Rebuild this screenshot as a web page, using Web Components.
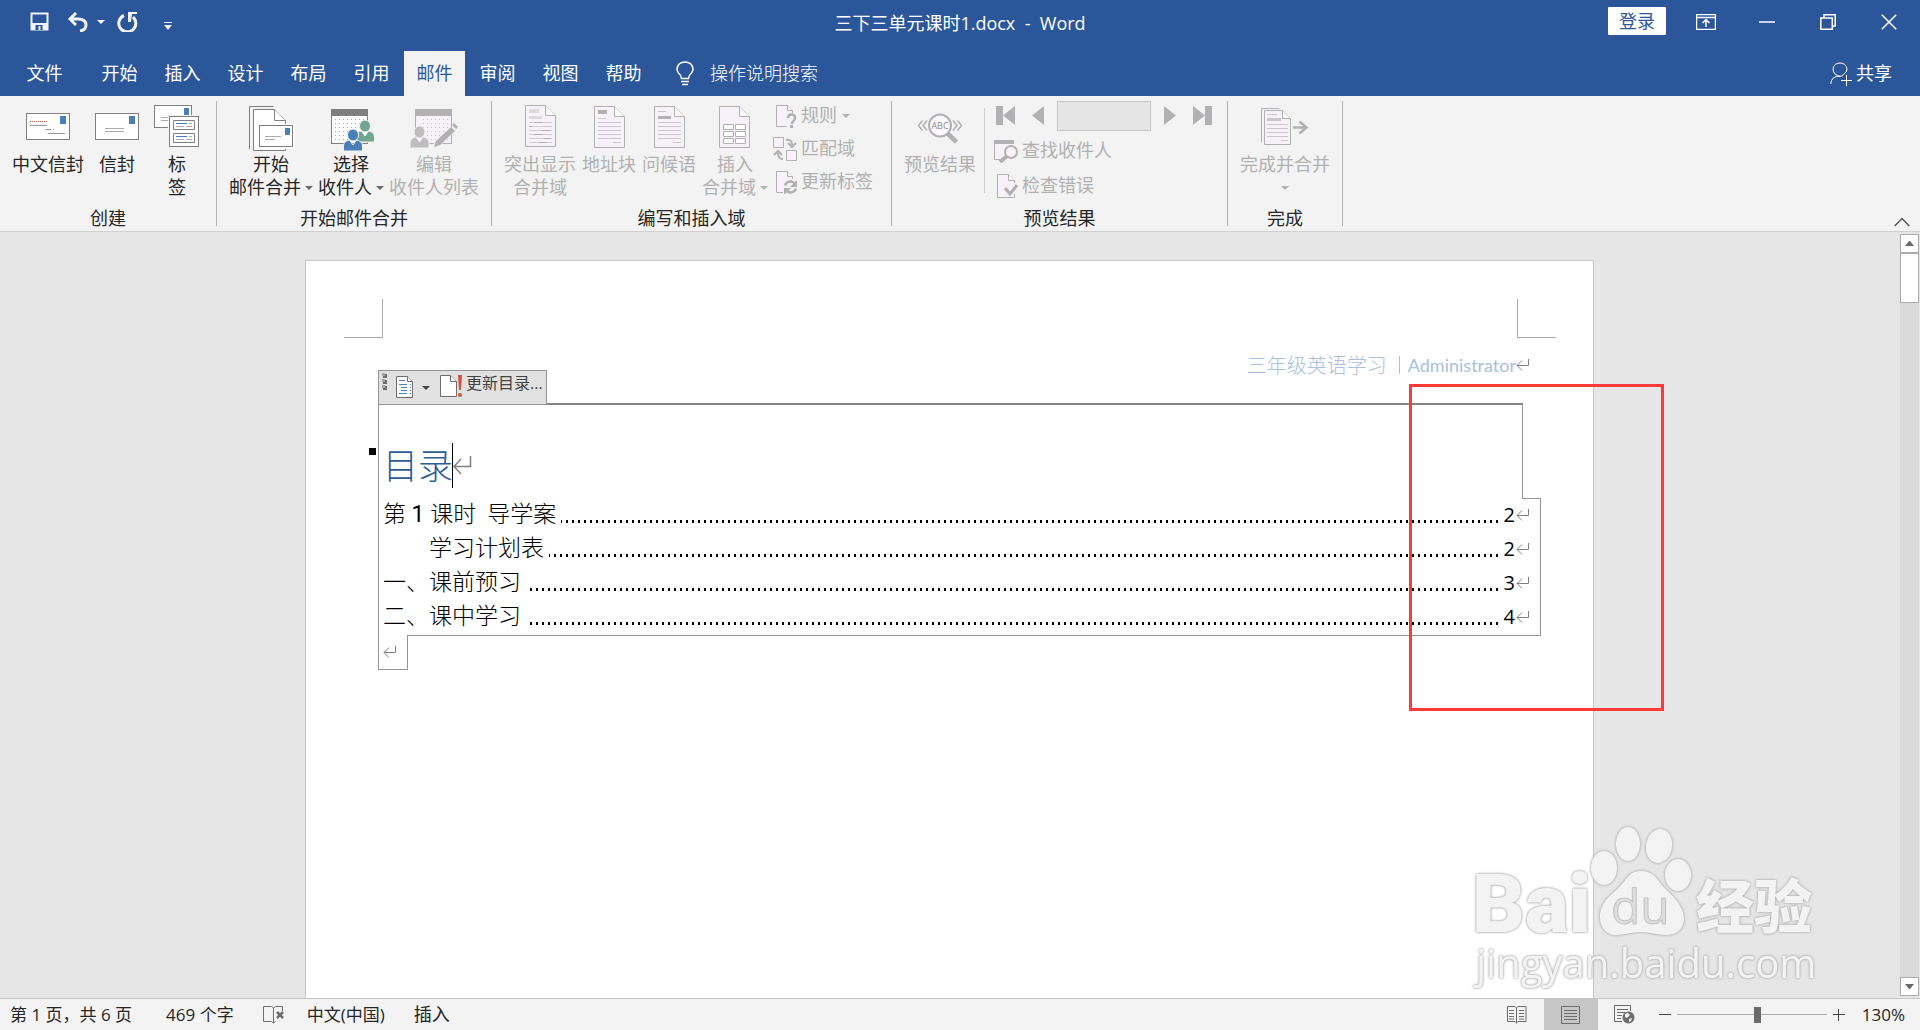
<!DOCTYPE html>
<html lang="zh-CN">
<head>
<meta charset="utf-8">
<title>三下三单元课时1.docx - Word</title>
<style>
html, body { height: 100%; margin: 0; }
body { font-family: "Open Sans", "Noto Sans CJK SC", sans-serif; font-size: 18px; line-height: 23px; color: #262626; overflow: hidden; }
</style>
</head>
<body>
<word-window></word-window>
<script>
const BASE = `*{box-sizing:border-box} button,input{font:inherit;color:inherit;border:0;background:none;padding:0;margin:0} button{display:flex;align-items:center;justify-content:center;white-space:nowrap} svg{display:block;flex:none}`;

function define(name, css, html) {
  customElements.define(name, class extends HTMLElement {
    connectedCallback() {
      if (this.shadowRoot) return;
      const t = document.createElement('template');
      t.innerHTML = `<style>${BASE}${css}</style>${typeof html === 'function' ? html(this) : html}`;
      this.attachShadow({ mode: 'open' }).append(t.content.cloneNode(true));
    }
  });
}

/* ---------- icons ---------- */
const dotGrid = (x, y, cols, rows, color) => {
  let s = '';
  for (let r = 0; r < rows; r++) for (let c = 0; c < cols; c++) s += `<rect x="${x + c * 4}" y="${y + r * 4}" width="1" height="1" fill="${color}"/>`;
  return s;
};
const page = (x, y, w, h, f, fill, stroke) =>
  `<path d="M${x} ${y}h${w - f}l${f} ${f}v${h - f}h-${w}z" fill="${fill}" stroke="${stroke}"/><path d="M${x + w - f} ${y}v${f}h${f}" fill="#f9f9f9" stroke="${stroke}"/>`;
const person = (cx, cy, r, color) =>
  `<g fill="${color}" stroke="#f3f3f3" stroke-width="1"><path d="M${cx - 9.5} ${cy + 16}v-5q0-5 6-6l3.500 5 3.500-5q6 1 6 6v5z"/><ellipse cx="${cx}" cy="${cy}" rx="${r}" ry="${r + .5}"/></g>`;
const G = '#b1b0b2', L = '#f7f2f9';

const ICONS = {
  'cn-envelope': [48, 48, `<rect x="2.500" y="10.500" width="43" height="26" fill="#fff" stroke="#7f7f7f"/><rect x="36" y="13" width="6" height="8" fill="#4a7fba"/><path d="M6 18.500h18" stroke="#c8513a" stroke-dasharray="1 1"/><path d="M6 22.500h17M21 26.500h6M29 26.500h1M24 30.500h17" stroke="#9a9a9a"/>`],
  'envelope': [48, 48, `<rect x="2.500" y="10.500" width="43" height="26" fill="#fff" stroke="#7f7f7f"/><rect x="36" y="13" width="6" height="8" fill="#4a7fba"/><path d="M12 25.500h19M12 28.500h19" stroke="#ababab"/>`],
  'labels': [48, 48, `<rect x="1.500" y="2.500" width="37" height="22" fill="#fff" stroke="#7f7f7f"/><rect x="31" y="5" width="5" height="7" fill="#4a7fba"/><path d="M8 14.500h8M8 17.500h8" stroke="#ababab"/><rect x="15" y="12" width="32" height="33" fill="#f3f3f3"/><rect x="16.500" y="13.500" width="29" height="30" fill="#fff" stroke="#7f7f7f"/><path d="M20.500 17.500h21v9h-21zM20.500 30.500h21v9h-21z" fill="#fff" stroke="#7f7f7f"/><path d="M23 20.500h11M23 33.500h11" stroke="#4a7fba"/><path d="M36 20.500h3M23 23.500h8M33 23.500h6M36 33.500h3M23 36.500h8M33 36.500h6" stroke="#ababab"/>`],
  'start-merge': [48, 48, `<path d="M2.500 46V3.500h24" fill="none" stroke="#7f7f7f"/><path d="M6.500 6.500h21l11 11v30h-32z" fill="#fff" stroke="#7f7f7f"/><path d="M27.500 6.500v11h11" fill="#fff" stroke="#7f7f7f"/><rect x="11" y="21" width="37" height="25" fill="#fff"/><rect x="12.500" y="22.500" width="33" height="21" fill="#fff" stroke="#7f7f7f"/><rect x="38" y="25" width="5" height="7" fill="#4a7fba"/><path d="M18 33.500h16M18 36.500h10" stroke="#ababab"/>`],
  'recipients': [48, 48, `<rect x="4.500" y="6.500" width="36" height="34" fill="#fff" stroke="#7f7f7f"/><rect x="4" y="6" width="37" height="7" fill="#7f7f7f"/>${dotGrid(8, 16, 8, 6, '#ababab')}${person(38, 23, 5.5, '#71a590')}${person(26, 32, 5.500, '#4a7fba')}`],
  'edit-list': [48, 48, `<rect x="5.500" y="6.500" width="36" height="34" fill="${L}" stroke="${G}"/><rect x="5" y="6" width="37" height="7" fill="${G}"/>${dotGrid(13, 16, 7, 6, '#c6c0c8')}${person(9.5, 29, 5.5, '#bfbdc0')}<path d="M21 46l4-8 16-14 4 4-15 15z" fill="#f3f3f3"/><path d="M24 44l2-6 15-14 4 4-15 14zM42 22l2-2 4 4-2 2z" fill="${G}"/>`],
  'highlight': [48, 48, `${page(9.5, 2.5, 30, 41, 10, L, G)}<path d="M13 6h10v4H13zM13 13h13v3H13z" fill="#dcd8de"/><path d="M13 19.500h23M13 23.500h23M13 27.500h23M13 31.500h23M13 35.500h23M13 39.500h23" stroke="#cfcbd1"/><path d="M18 19.500h9M13 23.500h3M26 27.500h8M18 31.500h9M28 35.500h6M23 39.500h8" stroke="${G}"/>`],
  'address': [48, 48, `${page(9.5, 3.5, 30, 41, 10, L, G)}<path d="M13 7h9v4h-9z" fill="${G}"/><path d="M13 15.500h8M13 19.500h23M13 23.500h23M13 27.500h23M13 31.500h23M13 35.500h23M28 39.500h8" stroke="#cac6cc"/>`],
  'greeting': [48, 48, `${page(9.5, 3.5, 30, 41, 10, L, G)}<path d="M13 13h13v3H13z" fill="${G}"/><path d="M13 8.500h8M13 19.500h23M13 23.500h23M13 27.500h23M13 31.500h23M13 35.500h23M28 39.500h8" stroke="#cac6cc"/>`],
  'insert-field': [48, 48, `${page(8.5, 3.5, 30, 41, 10, L, G)}<path d="M12.500 21.500h10v5h-10zM24.500 21.500h10v5h-10zM12.500 28.500h10v5h-10zM24.500 28.500h10v5h-10zM12.500 35.500h10v5h-10zM24.500 35.500h10v5h-10z" fill="#fff" stroke="${G}"/>`],
  'preview': [48, 48, `<path d="M6.500 17.500l-4 5 4 5M11 17.500l-4 5 4 5M37 17.500l4 5-4 5M41.500 17.500l4 5-4 5" fill="none" stroke="${G}" stroke-width="1.500"/><path d="M31 30l9.500 9" stroke="${G}" stroke-width="4.500"/><circle cx="24" cy="22.500" r="11" fill="#fbf8fc" stroke="${G}" stroke-width="2"/><text x="24" y="26" font-size="9" font-family="Open Sans" fill="#8f8d90" text-anchor="middle">ABC</text>`],
  'finish': [48, 48, `<path d="M.5 39V5.500h18" fill="none" stroke="${G}"/>${page(3.5, 7.5, 26, 34, 8, L, G)}<path d="M6 15h14v3H6z" fill="#cac6cc"/><path d="M6 11.500h10M6 21.500h21M6 25.500h21M6 29.500h21M6 33.500h21M20 37.500h7" stroke="#cac6cc"/><path d="M32 24.500h13M38.500 18.500l7 6-7 6" fill="none" stroke="${G}" stroke-width="2.500"/>`],
  'rules': [24, 24, `<path d="M16 22.500H3.500V1.500h11l5 5V9" fill="${L}" stroke="${G}"/><path d="M14.500 1.500v5h5" fill="#fff" stroke="${G}"/><path d="M12 9h12v15H14z" fill="#f3f3f3"/><path d="M15 14q0-3.500 3.500-3.500T22 14q0 2-1.500 3t-1.500 3" fill="none" stroke="${G}" stroke-width="2.500"/><rect x="17" y="21" width="3" height="3" fill="${G}"/>`],
  'match': [24, 24, `<path d="M.5.500h10v10H.500zM13.500 13.500h10v10h-10z" fill="${L}" stroke="${G}"/><path d="M13 3q6-1 6 5M15 6l4 4 4-4M10 22q-5 0-5-6M1 18l4-4 4 4" fill="none" stroke="${G}" stroke-width="2"/>`],
  'update-labels': [24, 24, `<path d="M10 22.500H3.500V1.500h11l5 5V9" fill="${L}" stroke="${G}"/><path d="M14.500 1.500v5h5" fill="#fff" stroke="${G}"/><circle cx="17.500" cy="17" r="7" fill="#f3f3f3"/><path d="M12 15.500q1.500-4 5.500-4 3 0 5 3" fill="none" stroke="${G}" stroke-width="2.500"/><path d="M24 10v7h-7zM11 25v-7h7z" fill="${G}"/><path d="M23 18.500q-1.500 4-5.500 4-3 0-5-3" fill="none" stroke="${G}" stroke-width="2.500"/>`],
  'find': [24, 24, `<path d="M6 20.500H.500V3" fill="${L}" stroke="${G}"/><rect x="1" y="3" width="19" height="17" fill="${L}"/><rect y="1" width="20" height="4" fill="${G}"/><path d="M13 17l-7 6" stroke="${G}" stroke-width="4"/><circle cx="17" cy="13" r="6" fill="${L}" stroke="${G}" stroke-width="2"/>`],
  'check': [24, 24, `<path d="M20.500 20v3.500h-17V.500h11l6 6V9" fill="${L}" stroke="${G}"/><path d="M14.500.500v6h6" fill="#fff" stroke="${G}"/><path d="M11 14l5 6 7-9" fill="none" stroke="${G}" stroke-width="3"/>`],
  'first': [19, 19, `<path d="M0 0h7v19H0zM19 0v19L7 9.500z" fill="${G}"/>`],
  'prev': [12, 19, `<path d="M12 0v19L0 9.500z" fill="${G}"/>`],
  'next': [12, 19, `<path d="M0 0v19l12-9.500z" fill="${G}"/>`],
  'last': [19, 19, `<path d="M0 0v19l12-9.500zM12 0h7v19h-7z" fill="${G}"/>`],
  'save': [19, 19, `<path d="M1.500 1.500h16v16h-16z" fill="none" stroke="#f0f3f8" stroke-width="2"/><path d="M1 11h17v7H1z" fill="#f0f3f8"/><path d="M5.500 13h7v5h-2v-4h-2v4h-3z" fill="#2b579a"/>`],
  'undo': [22, 20, `<path d="M9 1L3 7l6 6M3 7h8q8 0 8 6 0 5-6 6" fill="none" stroke="#f0f3f8" stroke-width="3"/>`],
  'redo': [21, 20, `<path d="M7 3.500A8.500 8.500 0 1 0 16 5" fill="none" stroke="#f0f3f8" stroke-width="3"/><path d="M11 0h9v2h-5l-1 8h-3z" fill="#f0f3f8"/>`],
  'caret': [8, 4, `<path d="M0 0h8L4 4z" fill="currentColor"/>`],
  'customize': [8, 8, `<path d="M0 0h8v1H0zM0 3h8L4 8z" fill="#f0f3f8"/>`],
  'ribbon-options': [20, 16, `<path d="M.5.500h19v15H.500zM1 3.500h18M10 13V6M6.500 9L10 5.500 13.500 9" fill="none" stroke="#fff" stroke-width="1.500"/>`],
  'minimise': [16, 16, `<path d="M0 8h16" stroke="#fff" stroke-width="1.500"/>`],
  'restore': [16, 16, `<path d="M.8 4h11.500v11.200H.800zM4 4V.800h11.200v11.200h-3" fill="none" stroke="#fff" stroke-width="1.500"/>`],
  'close': [16, 16, `<path d="M.8.800l14.400 14.400M15.200.800L.800 15.200" stroke="#fff" stroke-width="1.500"/>`],
  'bulb': [18, 25, `<path d="M5.500 17.500Q5 14 2.500 12 1 10 1 8q1-7 8-7t8 7q0 2-1.500 4-2.500 2-3 5.500z" fill="none" stroke="#fff" stroke-width="1.500"/><path d="M5 20.500h8M6 23.500h6" stroke="#fff" stroke-width="1.500"/>`],
  'share': [22, 24, `<path d="M.7 22q.5-8 9.300-8M14 12q-2 2.500-4 2.500T5 12Q3 10 3 7q1-6 7-6t7 6q0 3-3 5" fill="none" stroke="#fff"/><path d="M11 18.500h11M16.500 13v11" stroke="#fff"/>`],
  'collapse': [16, 10, `<path d="M.7 9L8 1.500 15.300 9" fill="none" stroke="#555" stroke-width="1.500"/>`],
  'up': [9, 5, `<path d="M0 5h9L5 0H4z" fill="#6a6a6a"/>`],
  'down': [9, 5, `<path d="M0 0h9L5 5H4z" fill="#6a6a6a"/>`],
  'grip': [5, 18, `<path d="M1 1h4v4H1zM1 7h4v4H1zM1 13h4v4H1z" fill="#6f6f6f"/><path d="M0 0h3v3H0zM0 6h3v3H0zM0 12h3v3H0z" fill="#a5a5a5"/>`],
  'toc': [18, 23, `${page(.5, .5, 16, 21, 5, '#fff', '#6d6d6d')}<path d="M3 4.500h6M3 8.500h8M5 11.500h6M5 14.500h6M3 17.500h8" stroke="#4a7fba"/><path d="M14.500 8v11" stroke="#4a7fba" stroke-dasharray="1 2"/>`],
  'toc-update': [23, 24, `${page(.5, 1.5, 16, 21, 6, '#fff', '#6d6d6d')}<path d="M18 1h4l-1 15h-2z" fill="#d2553a"/><circle cx="20" cy="21" r="2" fill="#d2553a"/>`],
  'return': [13, 12, `<path d="M12.500 0v6.500H1M6 1.500l-5 5 5 5" fill="none" stroke="#808080"/>`],
  'return-large': [19, 19, `<path d="M17.500 0v10.500H1M8 3l-7 7.500L8 18" fill="none" stroke="#808080" stroke-width="1.500"/>`],
  'proof': [22, 18, `<path d="M10.500 17V2L8.500.500h-8v15h8l2 1.500 2-1.500M10.500 2l2-1.500h7V5" fill="none" stroke="#6d6d6d"/><path d="M14 6l6 6M20 6l-6 6" stroke="#6d6d6d" stroke-width="2.500"/>`],
  'read': [20, 18, `<path d="M9.500 17.500V2M9.500 2L8 .500H.500v15H8l1.500 1.500 1.500-1.500h8V.500h-8z" fill="none" stroke="#6d6d6d"/><path d="M2 4.500h5M2 7.500h5M2 10.500h5M2 13h5M12 4.500h5M12 7.500h5M12 10.500h5M12 13h5" stroke="#6d6d6d"/>`],
  'print': [19, 18, `<path d="M.5.500h18v17H.500z" fill="none" stroke="#6d6d6d"/><path d="M3 4.500h13M3 7.500h13M3 10.500h13M3 13.500h13" stroke="#6d6d6d"/>`],
  'web': [21, 19, `<path d="M8 16.500H.500V.500h16V6" fill="none" stroke="#6d6d6d"/><path d="M3 4.500h11M3 7.500h8M3 10.500h5M3 13.500h4" stroke="#6d6d6d"/><circle cx="14.500" cy="12.500" r="6" fill="#6d6d6d"/><path d="M11 9l3-1 2 2-3 3-2-1zM15 14l3-1-1 3-2 1z" fill="#f3f3f3"/>`],
};
define('ui-icon', `:host{display:block;flex:none}`, el => {
  const [w, h, body] = ICONS[el.getAttribute('name')];
  return `<svg width="${w}" height="${h}" viewBox="0 0 ${w} ${h}" aria-hidden="true">${body}</svg>`;
});

/* ---------- title bar and tabs ---------- */
define('title-bar', `
:host{display:grid;grid-template-columns:1fr auto 1fr;height:51px;background:#2b579a;color:#fff}
.quick{display:flex;align-items:center;padding:0 0 8px 30px}
.quick button{height:22px}
.undo{margin-left:18px;gap:8px}.redo{margin-left:12px}.more{margin:9px 0 0 26px}
h1{margin:0;font:inherit;line-height:46px;white-space:pre}
.sys{display:flex;justify-content:flex-end;align-items:flex-start}
.sys .login{background:#fff;color:#2b579a;width:58px;height:28px;margin:7px 9px 0 0;border-radius:1px}
.sys button{width:61px;height:43px}
.sys{padding-right:1px}`,
`<div class="quick">
<button aria-label="保存"><ui-icon name="save"></ui-icon></button>
<button class="undo" aria-label="撤消"><ui-icon name="undo"></ui-icon><ui-icon name="caret"></ui-icon></button>
<button class="redo" aria-label="重复"><ui-icon name="redo"></ui-icon></button>
<button class="more" aria-label="自定义快速访问工具栏"><ui-icon name="customize"></ui-icon></button>
</div>
<h1>三下三单元课时1.docx  -  Word</h1>
<div class="sys"><button class="login">登录</button>
<button aria-label="功能区显示选项"><ui-icon name="ribbon-options"></ui-icon></button>
<button aria-label="最小化"><ui-icon name="minimise"></ui-icon></button>
<button aria-label="还原"><ui-icon name="restore"></ui-icon></button>
<button aria-label="关闭"><ui-icon name="close"></ui-icon></button></div>`);

define('tab-item', `
:host{display:block}
button{width:61px;height:45px}
:host([selected]) button{background:#f3f3f3;color:#2b579a}`, `<button role="tab"><slot></slot></button>`);

define('tab-bar', `
:host{display:flex;align-items:center;gap:2px;height:45px;padding-left:14px;background:#2b579a;color:#fff}
.file{margin-right:12px}
.tell{display:flex;align-items:center;gap:16px;margin-left:20px}
.tell input{width:160px;height:26px;padding-bottom:2px;outline:0;font-weight:300}
.tell input::placeholder{color:#fff;opacity:1}
.share{margin:0 28px 0 auto;gap:4px}`,
`<tab-item class="file">文件</tab-item>
${['开始', '插入', '设计', '布局', '引用', '邮件', '审阅', '视图', '帮助'].map(t => `<tab-item${t === '邮件' ? ' selected' : ''}>${t}</tab-item>`).join('')}
<label class="tell"><ui-icon name="bulb"></ui-icon><input type="text" placeholder="操作说明搜索" aria-label="操作说明搜索"></label>
<button class="share"><ui-icon name="share"></ui-icon><span>共享</span></button>`);

/* ---------- ribbon ---------- */
define('ribbon-group', `
:host{display:flex;flex-direction:column;height:125px;border-right:1px solid #b4b4b4}
.body{display:flex;height:110px;padding:0 var(--end,12px) 0 12px;gap:var(--gap,6px)}
.name{text-align:center;line-height:15px}`,
el => `<div class="body"><slot></slot></div><div class="name">${el.getAttribute('name')}</div>`);

define('ribbon-button', `
:host{display:block}
button{flex-direction:column;padding-top:2px;min-width:54px}
ui-icon[name=caret]{color:#6a6a6a}
.l{display:flex;align-items:center;gap:4px;min-height:23px}
.l:first-of-type{margin-top:2px}
button:disabled{color:#b1b1b1} button:disabled ui-icon[name=caret]{color:#b1b1b1}`,
el => {
  const lines = el.getAttribute('label').split('|'), menu = el.hasAttribute('menu');
  return `<button${el.hasAttribute('disabled') ? ' disabled' : ''}><ui-icon name="${el.getAttribute('icon')}"></ui-icon>${lines.map((t, i) =>
    `<span class="l">${t ? `<span>${t}</span>` : ''}${menu && i === lines.length - 1 ? '<ui-icon name="caret"></ui-icon>' : ''}</span>`).join('')}</button>`;
});

define('ribbon-row', `
:host{display:block}
button{gap:4px;height:var(--row,33px)}
button:disabled{color:#b1b1b1}
ui-icon[name=caret]{margin-left:1px}`,
el => `<button disabled><ui-icon name="${el.getAttribute('icon')}"></ui-icon><span>${el.getAttribute('label')}</span>${el.hasAttribute('menu') ? '<ui-icon name="caret"></ui-icon>' : ''}</button>`);

define('record-nav', `
:host{display:flex;align-items:center;gap:13px;height:35px;padding-left:2px}
div{display:flex;gap:17px}
input{width:94px;height:30px;background:#e5e5e5;border:1px solid #c6c6c6}`,
`<div><button disabled aria-label="首记录"><ui-icon name="first"></ui-icon></button><button disabled aria-label="上一记录"><ui-icon name="prev"></ui-icon></button></div>
<input type="text" disabled aria-label="记录">
<div><button disabled aria-label="下一记录"><ui-icon name="next"></ui-icon></button><button disabled aria-label="尾记录"><ui-icon name="last"></ui-icon></button></div>`);

define('ribbon-panel', `
:host{display:flex;align-items:flex-start;height:136px;padding-top:5px;background:#f3f3f3;border-bottom:1px solid #d0d0d0}
.col{display:flex;flex-direction:column;margin-top:-2px}
.fields{margin-left:-1px}
.tall{--row:35px;margin-top:-3px}
.rule{width:1px;height:85px;margin:7px 3px 0 2px;background:#d0d0d0}
.collapse{margin:116px 10px 0 auto}`,
`<ribbon-group name="创建">
<ribbon-button icon="cn-envelope" label="中文信封"></ribbon-button>
<ribbon-button icon="envelope" label="信封"></ribbon-button>
<ribbon-button icon="labels" label="标|签"></ribbon-button>
</ribbon-group>
<ribbon-group name="开始邮件合并" style="--gap:5px">
<ribbon-button icon="start-merge" label="开始|邮件合并" menu></ribbon-button>
<ribbon-button icon="recipients" label="选择|收件人" menu></ribbon-button>
<ribbon-button icon="edit-list" label="编辑|收件人列表" disabled></ribbon-button>
</ribbon-group>
<ribbon-group name="编写和插入域" style="--end:18px">
<ribbon-button icon="highlight" label="突出显示|合并域" disabled></ribbon-button>
<ribbon-button icon="address" label="地址块" disabled></ribbon-button>
<ribbon-button icon="greeting" label="问候语" disabled></ribbon-button>
<ribbon-button icon="insert-field" label="插入|合并域" menu disabled></ribbon-button>
<div class="col fields">
<ribbon-row icon="rules" label="规则" menu></ribbon-row>
<ribbon-row icon="match" label="匹配域"></ribbon-row>
<ribbon-row icon="update-labels" label="更新标签"></ribbon-row>
</div>
</ribbon-group>
<ribbon-group name="预览结果" style="--end:15px">
<ribbon-button icon="preview" label="预览结果" disabled></ribbon-button>
<div class="rule"></div>
<div class="col tall">
<record-nav></record-nav>
<ribbon-row icon="find" label="查找收件人"></ribbon-row>
<ribbon-row icon="check" label="检查错误"></ribbon-row>
</div>
</ribbon-group>
<ribbon-group name="完成">
<ribbon-button icon="finish" label="完成并合并|" menu disabled></ribbon-button>
</ribbon-group>
<button class="collapse" aria-label="折叠功能区"><ui-icon name="collapse"></ui-icon></button>`);

/* ---------- document ---------- */
define('toc-row', `
:host{display:flex;align-items:center;height:34px;padding:0 11px 2px 4px;font:300 23px/32px Roboto,"Noto Sans CJK SC",sans-serif;color:#000;white-space:pre}
:host([indent]) .t{padding-left:46px}
.dots{flex:1;height:3px;margin:13px 6px 0 5px;background:repeating-linear-gradient(to left,#000 0 2px,transparent 2px 6px)}
.n{font-family:"Open Sans";font-size:20px;font-weight:400}
ui-icon{margin-left:1px}`,
el => `<span class="t"><slot></slot></span><span class="dots"></span><span class="n">${el.getAttribute('page')}</span><ui-icon name="return"></ui-icon>`);

define('toc-frame', `
:host{display:block;--line:#959595}
.bar{position:relative;z-index:2;display:flex;width:169px;height:35px;background:#e1e1e1;border:1px solid var(--line);font-size:16px;line-height:25px;color:#444}
.grip{margin:2px 0 0 3px}
.bar button{align-items:flex-start}
.kind{gap:8px;margin:5px 0 0 9px;height:23px}
.kind ui-icon:last-child{margin-top:10px}
.update{gap:3px;margin:0 0 0 10px}
.update ui-icon{margin-top:3px}
.head{position:relative;z-index:1;width:calc(100% - 18px);height:96px;margin:-2px 0 -1px;padding:38px 0 0 4px;background:#fff;border:1px solid var(--line);border-top:2px solid #858585;border-bottom:0}
.head::before{content:"";position:absolute;left:-10px;top:43px;width:7px;height:7px;background:#000}
h2{display:flex;align-items:center;margin:0;font-weight:300;font-size:35px;line-height:45px;color:#2e5c95}
.cursor{width:1px;height:45px;background:#000;margin-left:-1px}
.rows{border:1px solid var(--line)}
b{font-weight:400}
.tail{position:relative;width:30px;height:35px;margin-top:-1px;padding:11px 0 0 4px;background:#fff;border:1px solid var(--line);border-top:0}`,
`<div class="bar"><ui-icon class="grip" name="grip"></ui-icon>
<button class="kind" aria-label="目录"><ui-icon name="toc"></ui-icon><ui-icon name="caret"></ui-icon></button>
<button class="update"><ui-icon name="toc-update"></ui-icon><span>更新目录...</span></button></div>
<div class="head"><h2>目录<span class="cursor"></span><ui-icon name="return-large"></ui-icon></h2></div>
<div class="rows">
<toc-row page="2">第 <b>1</b> 课时  导学案</toc-row>
<toc-row page="2" indent>学习计划表</toc-row>
<toc-row page="3">一、课前预习</toc-row>
<toc-row page="4">二、课中学习</toc-row>
</div>
<div class="tail"><ui-icon name="return"></ui-icon></div>`);

define('doc-page', `
:host{display:block;width:1289px;background:#fff;border:1px solid #c6c6c6;border-bottom:0;padding:38px 37px 0 38px}
.marks{display:flex;justify-content:space-between}
.marks span{width:39px;height:39px;border-bottom:1px solid #ababab}
.marks span:first-child{border-right:1px solid #ababab}
.marks span:last-child{border-left:1px solid #ababab}
header{display:flex;justify-content:flex-end;align-items:center;margin:16px 27px -6px 0;font:20px/22px Lato,"Noto Sans CJK SC",sans-serif;color:#a9c1e0}
.title{font-weight:300}
.bar{width:1px;height:18px;margin:0 8px 0 12px;background:#a9c1e0}
.who{font-size:18px}
toc-frame{margin:0 15px 0 34px}`,
`<div class="marks"><span></span><span></span></div>
<header><span class="title">三年级英语学习</span><span class="bar"></span><span class="who">Administrator</span><ui-icon name="return"></ui-icon></header>
<toc-frame></toc-frame>`);

define('scroll-bar', `
:host{display:flex;flex-direction:column;width:21px;padding:2px 1px 2px 1px}
button,.thumb{width:19px;background:#fff;border:1px solid #ababab}
button{height:19px}
.track{flex:1;background:#dadada}
.thumb{height:50px}`,
`<button aria-label="向上滚动"><ui-icon name="up"></ui-icon></button><div class="track"><div class="thumb"></div></div><button aria-label="向下滚动"><ui-icon name="down"></ui-icon></button>`);

define('water-mark', `:host{display:block;pointer-events:none} svg{filter:drop-shadow(0 0 1px #aaa) drop-shadow(0 0 1px #bbb)}`,
`<svg width="360" height="180" viewBox="0 0 360 180" fill="#fff" fill-opacity=".85">
<text x="4" y="114" font-family="Roboto" font-weight="900" font-size="82">Bai</text>
<g><ellipse cx="136" cy="50" rx="13" ry="17"/><ellipse cx="160" cy="26" rx="12" ry="17"/><ellipse cx="191" cy="28" rx="13" ry="17" transform="rotate(10 191 28)"/><ellipse cx="210" cy="57" rx="13" ry="16"/>
<path d="M173 53c10 0 14 5 20 13 7 9 23 19 23 35 0 10-8 16-17 16-10 0-16-3-26-3s-17 3-25 3c-10 0-16-8-16-18 0-17 15-24 23-34 6-8 9-12 18-12z"/></g>
<text x="143" y="106" font-family="Open Sans" font-size="48" fill="#ddd" fill-opacity="1" stroke="#c4c4c4" stroke-width="1">du</text>
<text x="228" y="110" font-family="Noto Sans CJK SC" font-weight="900" font-size="58">经验</text>
<text x="8" y="160" font-family="Open Sans" font-size="40">jingyan.baidu.com</text>
</svg>`);

/* ---------- status bar ---------- */
define('status-bar', `
:host{display:flex;align-items:center;height:32px;padding:0 15px 0 10px;background:#f3f3f3;border-top:1px solid #c6c6c6;font-size:17px}
.words{margin-left:34px}.proof{margin-left:29px}.lang{margin-left:22px}.mode{margin-left:29px;font-size:18px}
.views{display:flex;align-self:stretch;margin-left:auto}
.views button{width:54px}
.views .on{background:#c6c6c6}
.zoom{display:flex;align-items:center;gap:6px;margin-left:7px}
.zoom button{width:12px;height:20px}
input{appearance:none;width:150px;height:18px;background:linear-gradient(#ababab,#ababab) center/100% 1px no-repeat}
input::-webkit-slider-thumb{appearance:none;width:7px;height:16px;background:#6a6a6a}
.pct{margin-left:17px}`,
`<button>第 1 页，共 6 页</button><button class="words">469 个字</button>
<button class="proof" aria-label="校对"><ui-icon name="proof"></ui-icon></button>
<button class="lang">中文(中国)</button><button class="mode">插入</button>
<div class="views"><button aria-label="阅读视图"><ui-icon name="read"></ui-icon></button><button class="on" aria-label="页面视图"><ui-icon name="print"></ui-icon></button><button aria-label="Web 版式视图"><ui-icon name="web"></ui-icon></button></div>
<div class="zoom"><button aria-label="缩小"><svg width="12" height="12"><path d="M0 5.500h12" stroke="#444"/></svg></button>
<input type="range" min="0" max="100" value="54" aria-label="显示比例">
<button aria-label="放大"><svg width="12" height="12"><path d="M0 5.500h12M5.500 0v12" stroke="#444"/></svg></button></div>
<button class="pct">130%</button>`);

/* ---------- window ---------- */
define('word-window', `
:host{display:flex;flex-direction:column;height:100vh;background:#e6e6e6}
main{flex:1;min-height:0;display:flex}
.canvas{position:relative;flex:1;display:flex;justify-content:center;padding-top:28px;overflow:hidden}
.note{position:absolute;z-index:3;left:1409px;top:152px;width:255px;height:327px;border:3px solid #ff3838}
water-mark{position:absolute;z-index:3;right:71px;bottom:0}`,
`<title-bar></title-bar><tab-bar></tab-bar><ribbon-panel></ribbon-panel>
<main><div class="canvas"><doc-page></doc-page><div class="note"></div><water-mark></water-mark></div><scroll-bar></scroll-bar></main>
<status-bar></status-bar>`);
</script>
</body>
</html>
